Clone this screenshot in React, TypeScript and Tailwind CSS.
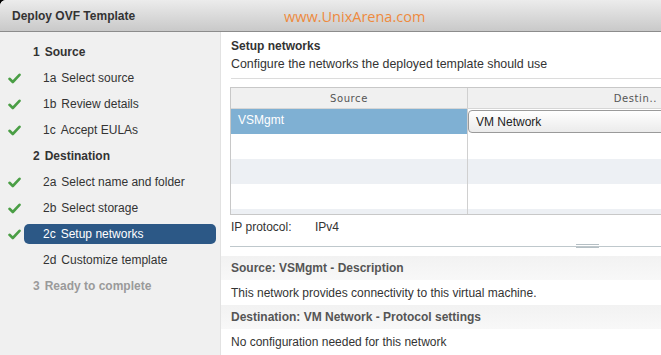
import React from 'react';

type Step = {
  id: string;
  label: string;
  main?: boolean;
  done?: boolean;
  active?: boolean;
  disabled?: boolean;
};

const steps: Step[] = [
  { id: '1', label: 'Source', main: true },
  { id: '1a', label: 'Select source', done: true },
  { id: '1b', label: 'Review details', done: true },
  { id: '1c', label: 'Accept EULAs', done: true },
  { id: '2', label: 'Destination', main: true },
  { id: '2a', label: 'Select name and folder', done: true },
  { id: '2b', label: 'Select storage', done: true },
  { id: '2c', label: 'Setup networks', done: true, active: true },
  { id: '2d', label: 'Customize template' },
  { id: '3', label: 'Ready to complete', main: true, disabled: true },
];

function Check() {
  return (
    <svg width="13" height="11" viewBox="0 0 13 11">
      <path d="M1.5 5.8 L4.8 9 L11.5 1.8" fill="none" stroke="#4a9e45" strokeWidth="2.6" strokeLinecap="round" strokeLinejoin="round" />
    </svg>
  );
}

export default function App() {
  return (
    <div className="w-[661px] h-[355px] bg-black overflow-hidden" style={{ fontFamily: '"Liberation Sans", Arial, sans-serif' }}>
      <div className="w-full h-full bg-white rounded-tl-[6px] overflow-hidden flex flex-col">
        {/* Title bar */}
        <div className="h-[32px] shrink-0 flex items-center relative bg-gradient-to-b from-[#ececec] to-[#c9c9c9] border-b border-[#8c8c8c]">
          <span className="pl-[12px] text-[12px] font-bold text-[#333]">Deploy OVF Template</span>
          <span className="absolute left-[284px] top-[6px] text-[14.5px] text-[#ee8a3e]" style={{ fontFamily: '"Open Sans", sans-serif' }}>
            www.UnixArena.com
          </span>
        </div>

        <div className="flex flex-1 min-h-0">
          {/* Steps */}
          <div className="w-[221px] shrink-0 bg-[#f0f0f0] border-r border-[#e2e2e2] pt-[7px] flex flex-col">
            {steps.map(s => (
              <div key={s.id} className="h-[26px] flex items-center">
                <div className="w-[24px] flex justify-center pl-[4px]">{s.done && <Check />}</div>
                <div
                  className={`w-[192px] h-[20px] flex items-center text-[12px] rounded-[5px] ${
                    s.main ? 'pl-[9px] font-bold' : 'pl-[19px]'
                  } ${s.active ? 'bg-[#2c5886] text-white' : s.disabled ? 'text-[#9a9a9a]' : 'text-[#333]'}`}
                >
                  <span className="mr-[5px]">{s.id}</span>
                  <span>{s.label}</span>
                </div>
              </div>
            ))}
          </div>

          {/* Content */}
          <div className="flex-1 min-w-0 overflow-hidden flex flex-col">
            <div className="pl-[10px] pt-[7px]">
              <div className="text-[12px] font-bold text-[#333] leading-[15px]">Setup networks</div>
              <div className="text-[12.4px] text-[#333] leading-[15px] mt-[3px] whitespace-nowrap">Configure the networks the deployed template should use</div>
              <div className="h-px bg-[#dcdcdc] mt-[6px] mr-[-4px]" />
            </div>

            {/* Table */}
            <div className="ml-[9px] mt-[8px] w-[520px] shrink-0 border border-[#c8c8c8] h-[128px] overflow-hidden">
              <div className="flex h-[21px] bg-[#f0f0f0] border-b border-[#d6d6d6] text-[10px] text-[#555] tracking-[0.6px]" style={{ fontFamily: '"DejaVu Sans", Tahoma, sans-serif' }}>
                <div className="w-[237px] border-r border-[#d0d0d0] flex items-center justify-center">Source</div>
                <div className="w-[190px] flex items-center justify-end pr-[1px]">Destin..</div>
              </div>
              <div className="flex h-[25px]">
                <div className="w-[237px] bg-[#7fb0d3] text-white text-[12px] pl-[7px] pt-[2px] border-r border-[#d0d0d0]">VSMgmt</div>
                <div className="flex-1 pt-[1px]">
                  <div className="h-[23px] border border-[#9a9a9a] rounded-l-[4px] bg-gradient-to-b from-white to-[#ebebeb] text-[12px] text-[#222] pl-[7px] flex items-center">
                    VM Network
                  </div>
                </div>
              </div>
              {['bg-white', 'bg-[#edf0f4]', 'bg-white', 'bg-[#edf0f4]'].map((c, i) => (
                <div key={i} className={`flex h-[25px] ${c}`}>
                  <div className="w-[237px] border-r border-[#d0d0d0]" />
                  <div className="flex-1" />
                </div>
              ))}
            </div>

            <div className="pl-[10px] mt-[5px] flex text-[12px] text-[#333] leading-[15px] whitespace-nowrap">
              <span className="w-[84px] shrink-0">IP protocol:</span>
              <span>IPv4</span>
            </div>

            {/* Splitter */}
            <div className="relative mt-[11px] ml-[9px] h-px shrink-0 bg-[#bfc8cc]">
              <div className="absolute left-[346px] top-[-2px] w-[23px] h-[4px] border-y border-[#b5bfc4]" />
            </div>

            <div className="mt-[9px] h-[24px] shrink-0 bg-gradient-to-b from-[#f2f2f2] to-[#f8f8f8] pl-[10px] flex items-center text-[12px] font-bold text-[#555]">
              Source: VSMgmt - Description
            </div>
            <div className="h-[25px] shrink-0 pl-[10px] flex items-center text-[12px] text-[#333]">
              This network provides connectivity to this virtual machine.
            </div>
            <div className="h-[24px] shrink-0 bg-gradient-to-b from-[#f2f2f2] to-[#f8f8f8] pl-[10px] flex items-center text-[12px] font-bold text-[#555]">
              Destination: VM Network - Protocol settings
            </div>
            <div className="h-[25px] shrink-0 pl-[10px] flex items-center text-[12px] text-[#333]">
              No configuration needed for this network
            </div>
          </div>
        </div>
      </div>
    </div>
  );
}
